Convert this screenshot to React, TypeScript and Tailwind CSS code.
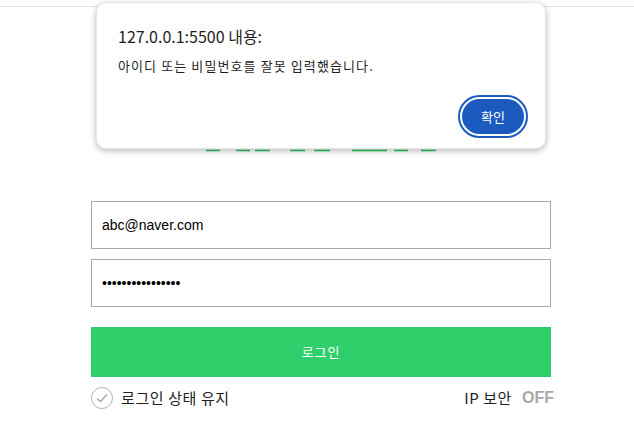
import { useState } from 'react';

const KR = "font-['Noto_Sans_CJK_KR','Malgun_Gothic',sans-serif]";

const App = () => {
  const [email, setEmail] = useState('abc@naver.com');
  const [password, setPassword] = useState('abcdefghijklmnop');

  return (
    <div className="relative w-[634px] h-[441px] overflow-hidden bg-white">
      {/* Browser top edge */}
      <div className="mt-[6px] border-t border-[#e2e2e2]" />

      {/* Logo (mostly hidden behind the alert) */}
      <div className="h-[194px]">
        <svg width="634" height="194" className="block">
          <g stroke="#1fc25a" strokeWidth="1.5">
            <line x1="206" y1="143.5" x2="220" y2="143.5" />
            <line x1="236" y1="143.5" x2="250" y2="143.5" />
            <line x1="255" y1="143.5" x2="270" y2="143.5" />
            <line x1="290" y1="143.5" x2="305" y2="143.5" />
            <line x1="314" y1="143.5" x2="330" y2="143.5" />
            <line x1="352" y1="143.5" x2="387" y2="143.5" />
            <line x1="394" y1="143.5" x2="408" y2="143.5" />
            <line x1="421" y1="143.5" x2="436" y2="143.5" />
          </g>
        </svg>
      </div>

      {/* Login form */}
      <div className="ml-[91px] w-[460px] flex flex-col">
        <input
          value={email}
          onChange={(e) => setEmail(e.target.value)}
          className="h-[48px] border border-[#a9a9a9] px-[10px] text-[14px] text-black font-['Liberation_Sans',Arial,sans-serif] outline-none"
        />
        <input
          type="password"
          value={password}
          onChange={(e) => setPassword(e.target.value)}
          className="mt-[10px] h-[48px] border border-[#a9a9a9] px-[10px] text-[14px] text-black font-['Liberation_Sans',Arial,sans-serif] outline-none"
        />
        <button className={`mt-[20px] h-[50px] bg-[#2fd06c] text-white text-[13px] tracking-[0.8px] ${KR}`}>
          로그인
        </button>
        <div className={`mt-[9px] flex items-center justify-between ${KR}`}>
          <label className="flex items-center gap-[8px]">
            <span className="w-[22px] h-[22px] rounded-full border border-[#b5b5b5] flex items-center justify-center">
              <svg width="12" height="10" viewBox="0 0 12 10" fill="none">
                <path d="M1 5.5 L4.5 8.5 L11 1.5" stroke="#a8a8a8" strokeWidth="1.3" />
              </svg>
            </span>
            <span className="text-[15px] tracking-[0.6px] text-[#222]">로그인 상태 유지</span>
          </label>
          <div className="flex items-center gap-[10px] mr-[-3px]">
            <span className="text-[15px] tracking-[0.6px] text-[#222]">IP 보안</span>
            <span className="text-[16px] font-bold text-[#a8a8a8] font-['Liberation_Sans',Arial,sans-serif]">OFF</span>
          </div>
        </div>
      </div>

      {/* Alert dialog */}
      <div className={`absolute left-[96px] top-[2px] w-[450px] h-[147px] bg-white rounded-[10px] border border-[#e6e6e6] shadow-[0_2px_6px_rgba(0,0,0,0.28)] flex flex-col ${KR}`}>
        <div className="pt-[22px] pl-[21px] text-[16px] leading-[22px] text-[#1f1f1f]">127.0.0.1:5500 내용:</div>
        <div className="mt-[10px] pl-[21px] text-[13px] tracking-[1.1px] leading-[18px] text-[#1f1f1f]">
          아이디 또는 비밀번호를 잘못 입력했습니다.
        </div>
        <div className="flex justify-end pr-[17px] mt-[20px]">
          <button className="w-[70px] h-[43px] rounded-full border-2 border-[#1b5bbf] p-[2px] bg-white">
            <span className="flex w-full h-full items-center justify-center rounded-full bg-[#1b5bbf] text-white text-[13px]">
              확인
            </span>
          </button>
        </div>
      </div>
    </div>
  );
};

export default App;
